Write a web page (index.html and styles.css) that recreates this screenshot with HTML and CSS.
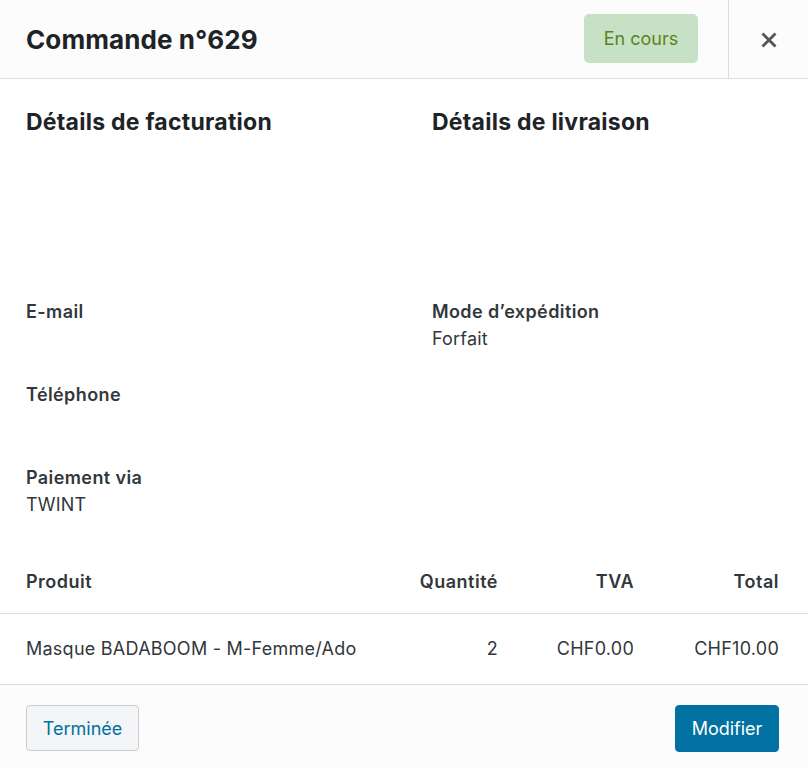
FILE: index.html
```html
<!DOCTYPE html>
<html lang="fr">
<head>
<meta charset="utf-8">
<title>Commande n°629</title>
<link rel="stylesheet" href="styles.css">
</head>
<body>
<div class="modal">
  <header class="modal-header">
    <h1 class="title">Commande n°629</h1>
    <span class="status">En cours</span>
    <button class="close" aria-label="Fermer">
      <svg width="16" height="16" viewBox="0 0 16 16"><path d="M1.5 1.5 L14.5 14.5 M14.5 1.5 L1.5 14.5" stroke="#555" stroke-width="2.8" stroke-linecap="butt" fill="none"/></svg>
    </button>
  </header>
  <main class="modal-body">
    <section class="details">
      <div class="col">
        <h2 class="heading">Détails de facturation</h2>
        <div class="address"></div>
        <div class="field"><div class="label">E-mail</div><div class="value"></div></div>
        <div class="field"><div class="label">Téléphone</div><div class="value"></div></div>
        <div class="field"><div class="label">Paiement via</div><div class="value">TWINT</div></div>
      </div>
      <div class="col">
        <h2 class="heading">Détails de livraison</h2>
        <div class="address"></div>
        <div class="field"><div class="label">Mode d’expédition</div><div class="value">Forfait</div></div>
      </div>
    </section>
    <div class="items">
      <div class="row head">
        <div class="cell">Produit</div>
        <div class="cell num">Quantité</div>
        <div class="cell num">TVA</div>
        <div class="cell num">Total</div>
      </div>
      <div class="row item">
        <div class="cell">Masque BADABOOM - M-Femme/Ado</div>
        <div class="cell num">2</div>
        <div class="cell num">CHF0.00</div>
        <div class="cell num">CHF10.00</div>
      </div>
    </div>
  </main>
  <footer class="modal-footer">
    <button class="btn btn-secondary">Terminée</button>
    <button class="btn btn-primary">Modifier</button>
  </footer>
</div>
</body>
</html>
```
FILE: styles.css
```css
* { box-sizing: border-box; }
html, body { margin: 0; padding: 0; }
body {
  font-family: Inter, "Noto Sans", "Liberation Sans", sans-serif;
  background: #fff;
  color: #32373c;
}
.modal {
  width: 808px;
  height: 768px;
  display: flex;
  flex-direction: column;
  overflow: hidden;
}
.modal-header {
  height: 79px;
  flex: none;
  display: flex;
  align-items: center;
  background: #fcfcfc;
  border-bottom: 1px solid #dcdcde;
}
.title {
  margin: 0 0 0 26px;
  flex: 1;
  font-size: 26px;
  font-weight: 700;
  color: #1d2327;
  letter-spacing: 0.1px;
}
.status {
  width: 114px;
  height: 49px;
  margin-top: -2px;
  display: flex;
  align-items: center;
  justify-content: center;
  background: #c6e1c6;
  color: #5b841b;
  border-radius: 5px;
  font-size: 18px;
  margin-right: 30px;
}
.close {
  width: 80px;
  height: 78px;
  align-self: flex-start;
  border: 0;
  border-left: 1px solid #dcdcde;
  background: transparent;
  display: flex;
  align-items: center;
  justify-content: center;
  padding: 0;
  padding-top: 2px;
}
.modal-body {
  flex: 1;
}
.details {
  display: grid;
  grid-template-columns: 350px 1fr;
  column-gap: 56px;
  padding: 28px 29px 0 26px;
}
.heading {
  margin: 0;
  font-size: 23px;
  line-height: 30px;
  font-weight: 700;
  color: #1d2327;
  letter-spacing: 0.25px;
}
.address {
  height: 161px;
}
.field {
  font-size: 18px;
  line-height: 27px;
  margin-bottom: 29px;
}
.label { font-weight: 600; color: #32373c; letter-spacing: 0.4px; }
.value { min-height: 27px; color: #32373c; letter-spacing: 0.2px; }
.items {
  font-size: 18px;
  line-height: 27px;
}
.row {
  display: grid;
  grid-template-columns: 1fr 120px 136px 145px;
  padding: 0 29px 0 26px;
}
.row.head {
  font-weight: 600;
  letter-spacing: 0.5px;
  padding-top: 21px;
  padding-bottom: 18px;
  border-bottom: 1px solid #dcdcde;
}
.row.item {
  letter-spacing: 0.25px;
  padding-top: 21px;
  padding-bottom: 21px;
}
.num { text-align: right; }
.modal-footer {
  flex: none;
  height: 84px;
  border-top: 1px solid #dcdcde;
  background: #fcfcfc;
  display: flex;
  justify-content: space-between;
  align-items: flex-start;
  padding: 20px 29px 0 26px;
}
.btn {
  font-family: inherit;
  font-size: 18px;
  height: 46px;
  border-radius: 4px;
  cursor: pointer;
}
.btn-secondary {
  width: 113px;
  background: #f3f5f6;
  color: #0071a1;
  border: 1px solid #c9cdd1;
}
.btn-primary {
  width: 104px;
  height: 47px;
  background: #0071a1;
  color: #fff;
  border: 1px solid #0071a1;
}
```
